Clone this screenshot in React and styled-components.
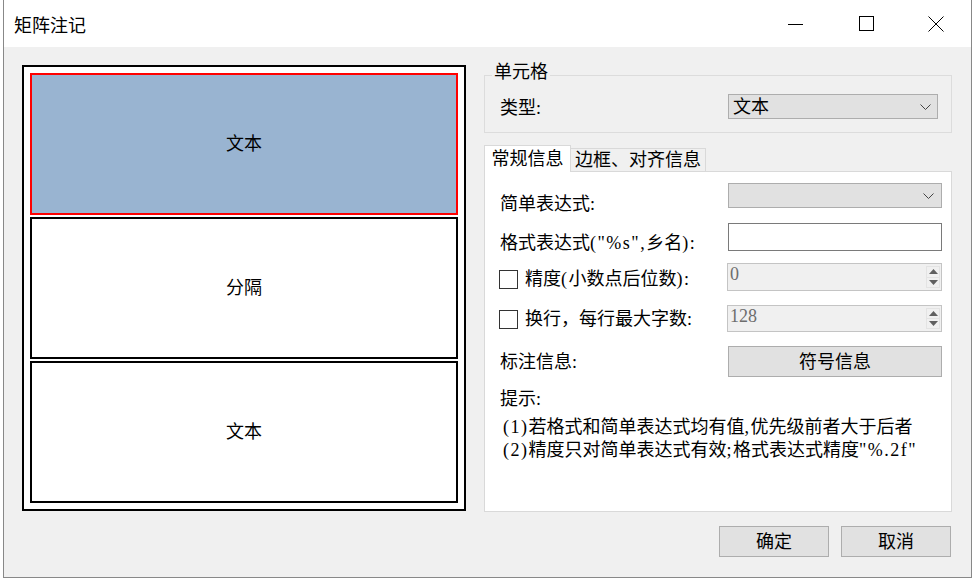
import React from "react";
import styled, { createGlobalStyle } from "styled-components";

const GlobalStyle = createGlobalStyle`
  html, body { margin: 0; padding: 0; background: #fff; }
  body { font-family: "Liberation Serif", "Noto Sans CJK SC", serif; color: #000; }
  * { box-sizing: border-box; }
`;

const Window = styled.div`
  margin-left: 3px;
  width: 969px;
  height: 578px;
  border: 1px solid #888;
  border-top: none;
  display: flex;
  flex-direction: column;
  background: #f0f0f0;
`;

const TitleBar = styled.div`
  height: 47px;
  flex-shrink: 0;
  background: #fff;
  display: flex;
  align-items: center;
`;

const Title = styled.div`
  flex: 1;
  padding-left: 10px;
  font: 18px/24px "Noto Sans CJK SC", sans-serif;
`;

const CaptionButton = styled.div`
  width: 70px;
  height: 47px;
  display: flex;
  align-items: center;
  justify-content: center;
`;

const Body = styled.div`
  flex: 1;
  display: flex;
  flex-direction: column;
  padding: 18px 19px 0 18px;
`;

const Main = styled.div`
  display: flex;
  gap: 18px;
`;

const Canvas = styled.div`
  width: 444px;
  height: 446px;
  border: 2px solid #000;
  background: #fff;
  padding: 6px;
  display: flex;
  flex-direction: column;
  gap: 2px;
`;

const Cell = styled.div`
  flex: 1;
  border: 2px solid ${(p) => (p.$selected ? "#ff0000" : "#000")};
  background: ${(p) => (p.$selected ? "#99b4d1" : "#fff")};
  display: flex;
  align-items: center;
  justify-content: center;
  padding-bottom: 4px;
  font: 18px/24px "Noto Sans CJK SC", sans-serif;
`;

const RightColumn = styled.div`
  width: 468px;
  display: flex;
  flex-direction: column;
`;

const GroupBox = styled.div`
  position: relative;
  margin-top: 10px;
  height: 58px;
  border: 1px solid #dcdcdc;
  padding: 18px 13px 0 15px;
  display: flex;
  align-items: flex-start;
  justify-content: space-between;
`;

const Legend = styled.div`
  position: absolute;
  top: -16px;
  left: 7px;
  padding: 0 2px;
  background: #f0f0f0;
  font-size: 18px;
  line-height: 24px;
`;

const Text = styled.div`
  font-size: 18px;
  line-height: 24px;
  white-space: nowrap;
  padding-top: ${(p) => p.$dy || 0}px;
`;

const Combo = styled.div`
  width: ${(p) => p.$w}px;
  height: 25px;
  background: #e1e1e1;
  border: 1px solid #adadad;
  display: flex;
  align-items: center;
  justify-content: space-between;
  padding: 0 ${(p) => p.$pr}px 0 4px;
  font-size: 18px;
  line-height: 22px;
`;

const TabStrip = styled.div`
  margin-top: 12px;
  margin-bottom: -1px;
  display: flex;
  align-items: flex-end;
  position: relative;
  z-index: 1;
`;

const Tab = styled.div`
  width: ${(p) => p.$w}px;
  height: ${(p) => (p.$active ? 27 : 24)}px;
  margin-left: ${(p) => (p.$active ? 0 : -1)}px;
  background: ${(p) => (p.$active ? "#fff" : "#f0f0f0")};
  border: 1px solid #d9d9d9;
  border-bottom: ${(p) => (p.$active ? "none" : "1px solid #d9d9d9")};
  display: flex;
  align-items: center;
  justify-content: center;
  font-size: 18px;
  line-height: 24px;
  white-space: nowrap;
`;

const Panel = styled.div`
  height: 341px;
  background: #fff;
  border: 1px solid #d9d9d9;
  padding: 11px 9px 0 15px;
  display: flex;
  flex-direction: column;
`;

const FormRow = styled.div`
  display: flex;
  align-items: flex-start;
  justify-content: space-between;
  margin-top: ${(p) => p.$gap || 0}px;
  height: ${(p) => p.$h}px;
`;

const CheckLabel = styled.div`
  display: flex;
  align-items: center;
  gap: 7px;
  padding-top: ${(p) => p.$dy || 0}px;
  font-size: 18px;
  line-height: 24px;
  white-space: nowrap;
`;

const CheckBox = styled.div`
  width: 19px;
  height: 19px;
  border: 1px solid #333;
  background: #fff;
  margin-left: -1px;
`;

const TextInput = styled.div`
  width: 214px;
  height: 28px;
  background: #fff;
  border: 1px solid #7a7a7a;
`;

const Spin = styled.div`
  width: 215px;
  height: ${(p) => p.$h}px;
  background: #f0f0f0;
  border: 1px solid #c4c4c4;
  display: flex;
`;

const SpinValue = styled.div`
  flex: 1;
  padding: 0 0 0 2px;
  color: #6d6d6d;
  font-size: 18px;
  line-height: 20px;
`;

const SpinButtons = styled.div`
  width: 15px;
  display: flex;
  flex-direction: column;
  padding: 2px 1px 2px 0;
`;

const SpinBtn = styled.div`
  flex: 1;
  display: flex;
  align-items: center;
  justify-content: center;
  border: 1px solid #e3e3e3;
  background: #f0f0f0;
  & + & {
    border-top: none;
  }
`;

const Button = styled.div`
  width: ${(p) => p.$w}px;
  height: 31px;
  background: #e1e1e1;
  border: 1px solid #adadad;
  display: flex;
  align-items: center;
  justify-content: center;
  font-size: 18px;
  line-height: 24px;
`;

const Tips = styled.div`
  margin-top: 10px;
  font-size: 18px;
  line-height: 24px;
`;

const HintLines = styled.div`
  margin-top: 5px;
  padding-left: 3px;
  font-size: 18px;
  line-height: 23px;
  white-space: nowrap;
`;

const Latin = styled.span`
  letter-spacing: ${(p) => p.$ls || 1.5}px;
`;

const Footer = styled.div`
  margin-top: 14px;
  display: flex;
  justify-content: flex-end;
  gap: 12px;
  padding-right: 1px;
`;

const Chevron = () => (
  <svg width="11" height="6" viewBox="0 0 11 6">
    <polyline points="0.5,0.5 5.5,5.5 10.5,0.5" fill="none" stroke="#444" strokeWidth="1" />
  </svg>
);

const Arrow = ({ up }) => (
  <svg width="9" height="5" viewBox="0 0 9 5">
    <polygon points={up ? "0,5 9,5 4.5,0" : "0,0 9,0 4.5,5"} fill="#606060" />
  </svg>
);

const SpinBox = ({ h, value }) => (
  <Spin $h={h}>
    <SpinValue>{value}</SpinValue>
    <SpinButtons>
      <SpinBtn>
        <Arrow up />
      </SpinBtn>
      <SpinBtn>
        <Arrow />
      </SpinBtn>
    </SpinButtons>
  </Spin>
);

export default function App() {
  return (
    <>
      <GlobalStyle />
      <Window>
        <TitleBar>
          <Title>矩阵注记</Title>
          <CaptionButton>
            <svg width="16" height="16" viewBox="0 0 16 16" shapeRendering="crispEdges">
              <line x1="0" y1="8.5" x2="15" y2="8.5" stroke="#000" strokeWidth="1" />
            </svg>
          </CaptionButton>
          <CaptionButton>
            <svg width="15" height="15" viewBox="0 0 15 15" shapeRendering="crispEdges">
              <rect x="0.5" y="0.5" width="14" height="14" fill="none" stroke="#000" strokeWidth="1" />
            </svg>
          </CaptionButton>
          <CaptionButton>
            <svg width="16" height="16" viewBox="0 0 16 16">
              <line x1="0.5" y1="0.5" x2="15.5" y2="15.5" stroke="#000" strokeWidth="1" />
              <line x1="15.5" y1="0.5" x2="0.5" y2="15.5" stroke="#000" strokeWidth="1" />
            </svg>
          </CaptionButton>
        </TitleBar>
        <Body>
          <Main>
            <Canvas>
              <Cell $selected>文本</Cell>
              <Cell>分隔</Cell>
              <Cell>文本</Cell>
            </Canvas>
            <RightColumn>
              <GroupBox>
                <Legend>单元格</Legend>
                <Text $dy={2}>类型:</Text>
                <Combo $w={210} $pr={6}>
                  <span>文本</span>
                  <Chevron />
                </Combo>
              </GroupBox>
              <TabStrip>
                <Tab $active $w={87}>常规信息</Tab>
                <Tab $w={136}>边框、对齐信息</Tab>
              </TabStrip>
              <Panel>
                <FormRow $h={25}>
                  <Text $dy={9}>简单表达式:</Text>
                  <Combo $w={214} $pr={7}>
                    <span />
                    <Chevron />
                  </Combo>
                </FormRow>
                <FormRow $gap={15} $h={28}>
                  <Text $dy={8}>
                    格式表达式<Latin>("%s",</Latin>乡名<Latin>):</Latin>
                  </Text>
                  <TextInput />
                </FormRow>
                <FormRow $gap={12} $h={28}>
                  <CheckLabel $dy={4}>
                    <CheckBox />
                    <span>
                      精度<Latin>(</Latin>小数点后位数<Latin>):</Latin>
                    </span>
                  </CheckLabel>
                  <SpinBox h={28} value="0" />
                </FormRow>
                <FormRow $gap={14} $h={27}>
                  <CheckLabel $dy={2}>
                    <CheckBox />
                    换行，每行最大字数:
                  </CheckLabel>
                  <SpinBox h={27} value="128" />
                </FormRow>
                <FormRow $gap={14} $h={31}>
                  <Text $dy={4}>标注信息:</Text>
                  <Button $w={214}>符号信息</Button>
                </FormRow>
                <Tips>提示:</Tips>
                <HintLines>
                  <div>
                    <Latin>(1)</Latin>若格式和简单表达式均有值<Latin>,</Latin>优先级前者大于后者
                  </div>
                  <div>
                    <Latin>(2)</Latin>精度只对简单表达式有效<Latin>;</Latin>格式表达式精度<Latin>"%.2f"</Latin>
                  </div>
                </HintLines>
              </Panel>
            </RightColumn>
          </Main>
          <Footer>
            <Button $w={110}>确定</Button>
            <Button $w={110}>取消</Button>
          </Footer>
        </Body>
      </Window>
    </>
  );
}
